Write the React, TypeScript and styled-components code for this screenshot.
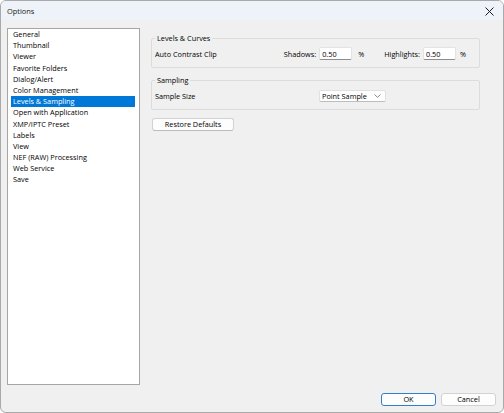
import React from "react";
import styled, {createGlobalStyle} from "styled-components";

const GlobalStyle = createGlobalStyle`
  html, body {
    margin: 0;
    padding: 0;
    background: #ffffff;
  }
  body {
    font-family: "Open Sans", "Noto Sans", sans-serif;
    font-size: 7.3px;
    color: #000;
  }
`

const pages = [
    "General",
    "Thumbnail",
    "Viewer",
    "Favorite Folders",
    "Dialog/Alert",
    "Color Management",
    "Levels & Sampling",
    "Open with Application",
    "XMP/IPTC Preset",
    "Labels",
    "View",
    "NEF (RAW) Processing",
    "Web Service",
    "Save",
]

const CloseIcon = () => (
    <svg width="9" height="9" viewBox="0 0 9 9">
        <path d="M0.5 0.5 L8.5 8.5 M8.5 0.5 L0.5 8.5" stroke="#1a1a1a" strokeWidth="1" fill="none"/>
    </svg>
)

const Chevron = () => (
    <svg width="7" height="4" viewBox="0 0 7 4">
        <path d="M0.5 0.5 L3.5 3.3 L6.5 0.5" stroke="#7a7a7a" strokeWidth="0.9" fill="none"/>
    </svg>
)

export default function App() {
    return (
        <>
            <GlobalStyle/>
            <Window>
                <TitleBar>
                    <Title>Options</Title>
                    <CloseButton><CloseIcon/></CloseButton>
                </TitleBar>
                <Body>
                    <Main>
                        <PageList>
                            {pages.map(p => (
                                <PageItem key={p} $selected={p === "Levels & Sampling"}>{p}</PageItem>
                            ))}
                        </PageList>
                        <Panel>
                            <Group>
                                <Legend>Levels &amp; Curves</Legend>
                                <Row>
                                    <RowLabel>Auto Contrast Clip</RowLabel>
                                    <FieldLabel>Shadows:</FieldLabel>
                                    <NumberBox>0.50</NumberBox>
                                    <Unit>%</Unit>
                                    <FieldLabel>Highlights:</FieldLabel>
                                    <NumberBox>0.50</NumberBox>
                                    <Unit $trailing>%</Unit>
                                </Row>
                            </Group>
                            <Group>
                                <Legend>Sampling</Legend>
                                <Row>
                                    <RowLabel>Sample Size</RowLabel>
                                    <Select>
                                        <span>Point Sample</span>
                                        <Chevron/>
                                    </Select>
                                    <SelectSpacer/>
                                </Row>
                            </Group>
                            <RestoreButton>Restore Defaults</RestoreButton>
                        </Panel>
                    </Main>
                    <Footer>
                        <DialogButton $default>OK</DialogButton>
                        <DialogButton>Cancel</DialogButton>
                    </Footer>
                </Body>
            </Window>
        </>
    )
}

const Window = styled.div`
  box-sizing: border-box;
  width: 504px;
  height: 413px;
  border: 1px solid #a9a9a9;
  border-radius: 6px;
  overflow: hidden;
  background: #f0f0f0;
  display: flex;
  flex-direction: column;
`

const TitleBar = styled.div`
  height: 19px;
  flex: none;
  background: #eef3f9;
  display: flex;
  align-items: center;
  justify-content: space-between;
  padding: 0 6px 0 6px;
`

const Title = styled.div`
  font-size: 7.4px;
  color: #1b1b1b;
  padding-top: 1px;
`

const CloseButton = styled.div`
  display: flex;
  align-items: center;
  justify-content: center;
  width: 14px;
  height: 14px;
  margin-top: 1px;
  margin-right: 1px;
`

const Body = styled.div`
  flex: 1;
  display: flex;
  flex-direction: column;
  padding: 8px 7px 6px 6px;
  min-height: 0;
`

const Main = styled.div`
  flex: 1;
  display: flex;
  gap: 11px;
  min-height: 0;
`

const PageList = styled.div`
  box-sizing: border-box;
  width: 133px;
  flex: none;
  background: #fff;
  border: 1px solid #a6a6a6;
  padding: 0 4px 0 3px;
`

const PageItem = styled.div<{ $selected?: boolean }>`
  height: 11.2px;
  line-height: 11.2px;
  padding-left: 2px;
  white-space: nowrap;
  background: ${p => p.$selected ? "#0078d7" : "transparent"};
  color: ${p => p.$selected ? "#fff" : "#000"};
`

const Panel = styled.div`
  flex: 1;
  display: flex;
  flex-direction: column;
  align-items: flex-start;
  padding-top: 6px;
  padding-right: 16px;
`

const Group = styled.fieldset`
  box-sizing: border-box;
  align-self: stretch;
  margin: 0 0 8px 0;
  padding: 0 13px 7px 3px;
  border: 1px solid #dcdcdc;
  border-radius: 2px;
  min-width: 0;
`

const Legend = styled.legend`
  padding: 0 2px;
  line-height: 9px;
  color: #000;
`

const Row = styled.div`
  display: flex;
  align-items: center;
  margin-top: 4px;
  height: 13px;
`

const RowLabel = styled.div`
  flex: 1;
  white-space: nowrap;
`

const FieldLabel = styled.div`
  margin-right: 3px;
  white-space: nowrap;
`

const NumberBox = styled.div`
  box-sizing: border-box;
  width: 33px;
  height: 13px;
  line-height: 12px;
  padding-left: 2px;
  background: #fff;
  border: 1px solid #e3e3e3;
  border-bottom-color: #8d8d8d;
  border-radius: 2px;
`

const Unit = styled.div<{ $trailing?: boolean }>`
  margin-left: ${p => p.$trailing ? "4px" : "6px"};
  width: ${p => p.$trailing ? "auto" : "26px"};
`

const Select = styled.div`
  box-sizing: border-box;
  width: 67px;
  height: 12px;
  display: flex;
  align-items: center;
  justify-content: space-between;
  padding: 0 4px 0 2px;
  background: #fff;
  border: 1px solid #e0e0e0;
  border-bottom-color: #bdbdbd;
  border-radius: 2px;
`

const SelectSpacer = styled.div`
  width: 80px;
`

const RestoreButton = styled.div`
  box-sizing: border-box;
  width: 82px;
  height: 13px;
  line-height: 11px;
  text-align: center;
  background: #fdfdfd;
  border: 1px solid #d2d2d2;
  border-bottom-color: #bcbcbc;
  border-radius: 3px;
  margin-left: 1px;
`

const Footer = styled.div`
  flex: none;
  display: flex;
  justify-content: flex-end;
  gap: 5px;
  margin-top: 8px;
`

const DialogButton = styled.div<{ $default?: boolean }>`
  box-sizing: border-box;
  width: 55px;
  height: 13px;
  line-height: 11px;
  text-align: center;
  background: #fdfdfd;
  border: 1px solid ${p => p.$default ? "#2f7fd0" : "#d2d2d2"};
  border-radius: 3px;
`
